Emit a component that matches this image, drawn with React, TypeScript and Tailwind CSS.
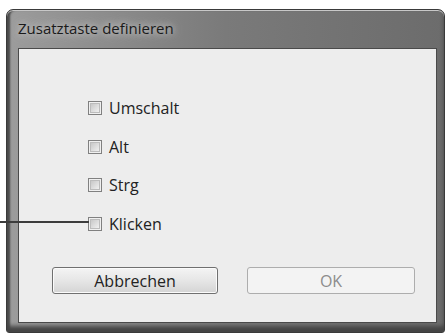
import React from "react";

function Box() {
  return (
    <span className="flex h-[14px] w-[14px] items-center justify-center border border-[#808080] bg-[#f0f0f0]">
      <span className="h-[10px] w-[10px] border border-[#bcbcbc] bg-gradient-to-br from-[#c8c8c8] to-[#f0f0f0]" />
    </span>
  );
}

function Row({ label }: { label: string }) {
  return (
    <div className="flex h-[38.5px] items-center gap-[7px]">
      <Box />
      <span className="text-[16px] font-medium leading-none text-[#222]">{label}</span>
    </div>
  );
}

export default function App() {
  return (
    <div
      className="relative h-[334px] w-[448px] overflow-hidden bg-white"
      style={{ fontFamily: '"Open Sans", "Noto Sans", sans-serif' }}
    >
      <div className="ml-[6px] mt-[9px] flex h-[324px] w-[439px] flex-col rounded-t-[7px] rounded-b-[3px] border border-[#3a3a3a] bg-gradient-to-r from-[#9c9c9c] via-[#7a7a7a] to-[#6c6c6c] pb-[9px] pl-[11px] pr-[7px] shadow-[inset_0_1px_0_#c8c8c8,inset_0_-6px_4px_#444,inset_3px_0_2px_#4e4e4e]">
        <div className="flex h-[38px] items-center pb-[2px]">
          <span
            className="text-[15px] font-medium leading-none text-[#1a1a1a]"
            style={{ textShadow: "0 0 6px #d0d0d0, 0 0 12px #c0c0c0" }}
          >
            Zusatztaste definieren
          </span>
        </div>
        <div className="flex flex-1 flex-col border border-[#4a4a4a] bg-[#ededed] pl-[69px] pt-[40px]">
          <Row label="Umschalt" />
          <Row label="Alt" />
          <Row label="Strg" />
          <Row label="Klicken" />
          <div className="mt-[24px] flex -ml-[36px] pr-[21px] justify-between">
            <button className="flex h-[27px] w-[166px] items-center justify-center rounded-[3px] border border-[#707070] bg-gradient-to-b from-[#f4f4f4] via-[#e6e6e6] to-[#d4d4d4] text-[16px] font-medium leading-none text-[#222] shadow-[inset_0_0_0_1px_#fbfbfb]">
              Abbrechen
            </button>
            <button className="flex h-[27px] w-[168px] items-center justify-center rounded-[3px] border border-[#adadad] bg-[#f3f3f3] text-[16px] leading-none text-[#8c8c8c]">
              OK
            </button>
          </div>
        </div>
      </div>
      <div className="absolute left-0 top-[221px] h-[2px] w-[89px] bg-[#3c3c3c]" />
    </div>
  );
}
